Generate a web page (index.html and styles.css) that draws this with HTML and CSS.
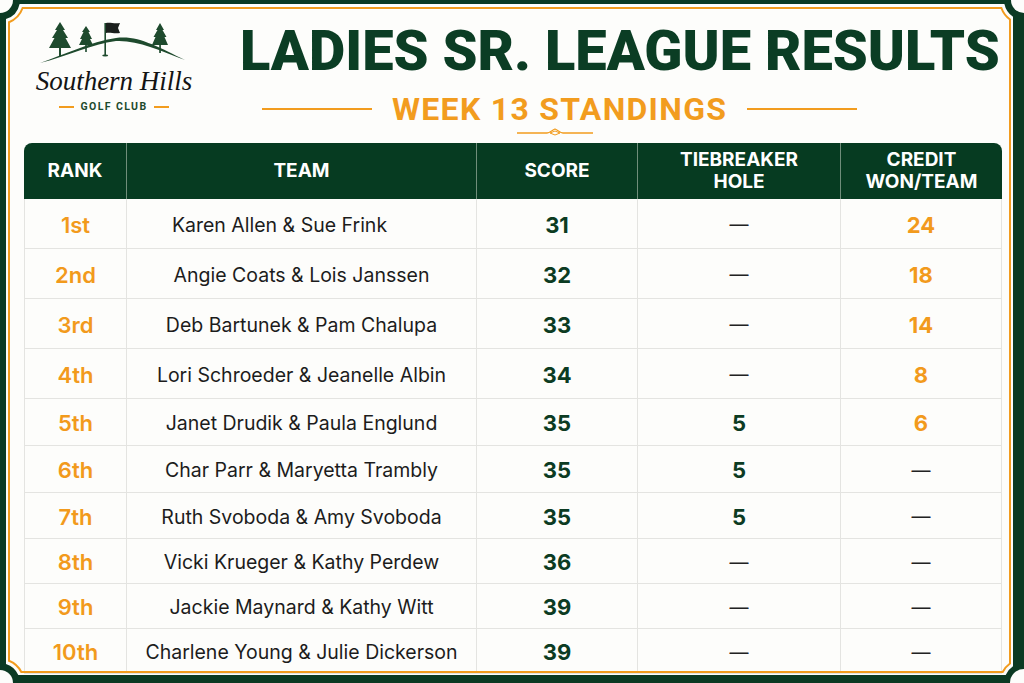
FILE: index.html
```html
<!DOCTYPE html>
<html lang="en">
<head>
<meta charset="utf-8">
<title>Ladies Sr. League Results</title>
<link rel="stylesheet" href="styles.css">
</head>
<body>
<div class="page">
  <header class="top">
    <div class="logo">
      <svg class="logo-art" viewBox="0 0 152 50" aria-hidden="true">
        <g fill="#1e4a2d">
          <polygon points="22,2 27,10 25,10 30,18 27.5,18 33,28 11,28 16.5,18 14,18 19,10 17,10"/>
          <rect x="21" y="27" width="2" height="9"/>
          <polygon points="48,6 52,12 50.5,12 54,19 52,19 55,25 41,25 44,19 42,19 45.5,12 44,12"/>
          <rect x="47.2" y="24" width="1.6" height="8"/>
          <polygon points="122,3 126,10 124.5,10 128.5,17 126.5,17 130,25 114,25 117.5,17 115.5,17 119.5,10 118,10"/>
          <rect x="121.2" y="24" width="1.7" height="9"/>
          <path d="M2 43 C28 34 52 22 78 18 C100 15 120 27 147 40 C120 30 100 20 78 21 C54 24 30 36 2 43 Z"/>
        </g>
        <rect x="66.4" y="3" width="1.6" height="32" fill="#1e4a2d"/>
        <path d="M68 3 C72 2 76 4 82 3 L80 8 L82 13 C76 14 72 12 68 13 Z" fill="#1b1f1d"/>
        <ellipse cx="67.2" cy="35.5" rx="3" ry="0.9" fill="#1e4a2d"/>
      </svg>
      <div class="logo-name">Southern Hills</div>
      <div class="logo-sub"><span class="dash"></span><span>GOLF CLUB</span><span class="dash"></span></div>
    </div>
    <div class="titles">
      <h1>LADIES SR. LEAGUE RESULTS</h1>
      <div class="sub"><span class="line"></span><h2>WEEK 13 STANDINGS</h2><span class="line"></span></div>
      <svg class="ornament" viewBox="0 0 76 10" aria-hidden="true">
        <path d="M0 6 H30 C33 6 35 3 38 2 C41 3 43 6 46 6 H76" fill="none" stroke="#f29c1e" stroke-width="1.3"/>
        <path d="M33 6 L38 4 L43 6 L38 8 Z" fill="none" stroke="#f29c1e" stroke-width="1"/>
      </svg>
    </div>
  </header>

  <div class="table">
    <div class="th">RANK</div>
    <div class="th">TEAM</div>
    <div class="th">SCORE</div>
    <div class="th">TIEBREAKER<br>HOLE</div>
    <div class="th">CREDIT<br>WON/TEAM</div>

    <div class="td rank">1st</div><div class="td team shift">Karen Allen &amp; Sue Frink</div><div class="td score">31</div><div class="td tie">—</div><div class="td cred">24</div>
    <div class="td rank">2nd</div><div class="td team">Angie Coats &amp; Lois Janssen</div><div class="td score">32</div><div class="td tie">—</div><div class="td cred">18</div>
    <div class="td rank">3rd</div><div class="td team">Deb Bartunek &amp; Pam Chalupa</div><div class="td score">33</div><div class="td tie">—</div><div class="td cred">14</div>
    <div class="td rank">4th</div><div class="td team">Lori Schroeder &amp; Jeanelle Albin</div><div class="td score">34</div><div class="td tie">—</div><div class="td cred">8</div>
    <div class="td rank">5th</div><div class="td team">Janet Drudik &amp; Paula Englund</div><div class="td score">35</div><div class="td tie num">5</div><div class="td cred">6</div>
    <div class="td rank">6th</div><div class="td team">Char Parr &amp; Maryetta Trambly</div><div class="td score">35</div><div class="td tie num">5</div><div class="td cred dash">—</div>
    <div class="td rank">7th</div><div class="td team">Ruth Svoboda &amp; Amy Svoboda</div><div class="td score">35</div><div class="td tie num">5</div><div class="td cred dash">—</div>
    <div class="td rank">8th</div><div class="td team">Vicki Krueger &amp; Kathy Perdew</div><div class="td score">36</div><div class="td tie">—</div><div class="td cred dash">—</div>
    <div class="td rank">9th</div><div class="td team">Jackie Maynard &amp; Kathy Witt</div><div class="td score">39</div><div class="td tie">—</div><div class="td cred dash">—</div>
    <div class="td rank">10th</div><div class="td team">Charlene Young &amp; Julie Dickerson</div><div class="td score">39</div><div class="td tie">—</div><div class="td cred dash">—</div>
  </div>

  <svg class="frame" viewBox="0 0 1024 683" aria-hidden="true">
    <path fill="#0b3a23" fill-rule="evenodd" d="M0 0 H1024 V683 H0 Z M6 19.1 A20 20 0 0 0 19.6 4 H1004.4 A20 20 0 0 0 1013 16.7 V666.3 A20 20 0 0 0 1005.7 675 H18.3 A20 20 0 0 0 6 663.9 Z"/>
    <circle cx="0" cy="0" r="13" fill="#fdfdfb"/>
    <circle cx="1024" cy="0" r="13" fill="#fdfdfb"/>
    <circle cx="0" cy="683" r="13" fill="#fdfdfb"/>
    <circle cx="1024" cy="683" r="14" fill="#fdfdfb"/>
    <path fill="none" stroke="#f29c1e" stroke-width="2" d="M9 22.2 A24 24 0 0 0 22.6 8 H1001.4 A24 24 0 0 0 1010 19.5 V663.5 A24 24 0 0 0 1002.7 672 H21.3 A24 24 0 0 0 9 660.8 Z"/>
  </svg>
</div>
</body>
</html>
```

FILE: styles.css
```css
* { box-sizing: border-box; margin: 0; padding: 0; }

body {
  margin: 0;
  background: #fdfdfb;
  font-family: Inter, Roboto, "Liberation Sans", sans-serif;
}

.page {
  position: relative;
  width: 1024px;
  height: 683px;
  overflow: hidden;
  background: #fdfdfb;
}

/* ---------- header ---------- */
.top {
  display: flex;
  height: 143px;
}

.logo {
  width: 152px;
  margin: 20px 0 0 38px;
  display: flex;
  flex-direction: column;
  align-items: center;
}

.logo-art {
  display: block;
  width: 152px;
  height: 50px;
}

.logo-name {
  margin-top: -4px;
  font-family: "Liberation Serif", serif;
  font-style: italic;
  font-size: 27px;
  line-height: 30px;
  color: #141414;
  white-space: nowrap;
}

.logo-sub {
  display: flex;
  align-items: center;
  gap: 6px;
  margin-top: 5px;
  font-family: Roboto, "Liberation Sans", sans-serif;
  font-size: 10.5px;
  line-height: 12px;
  font-weight: 700;
  letter-spacing: 1.4px;
  color: #1e4a2d;
}

.logo-sub .dash {
  width: 15px;
  height: 2px;
  background: #f29c1e;
}

.titles {
  flex: 1;
  display: flex;
  flex-direction: column;
}

h1 {
  margin: 23px 0 0 50px;
  font-family: Roboto, "Liberation Sans", sans-serif;
  font-weight: 900;
  font-size: 56px;
  line-height: 56px;
  color: #0b3d24;
  white-space: nowrap;
}

.sub {
  display: flex;
  align-items: center;
  gap: 20px;
  margin: 14px 0 0 72px;
  height: 32px;
}

.sub .line {
  width: 110px;
  height: 2px;
  background: #f29c1e;
}

h2 {
  font-family: Roboto, "Liberation Sans", sans-serif;
  font-weight: 700;
  font-size: 32px;
  line-height: 32px;
  letter-spacing: 1.3px;
  color: #f29c1e;
  white-space: nowrap;
}

.ornament {
  display: block;
  width: 76px;
  height: 10px;
  margin: 2px 0 0 327px;
}

/* ---------- table ---------- */
.table {
  margin-left: 24px;
  width: 978px;
  display: grid;
  grid-template-columns: 103px 350px 161px 203px 161px;
  grid-template-rows: 56px 50px 50px 50px 50px 47px 47px 46px 45px 45px 45px;
}

.th {
  display: flex;
  align-items: center;
  justify-content: center;
  text-align: center;
  background: #063b21;
  color: #ffffff;
  font-weight: 700;
  font-size: 19px;
  line-height: 22px;
  border-right: 1px solid #6f8d7a;
}

.th:first-child { border-top-left-radius: 8px; }
.th:nth-child(5) { border-top-right-radius: 8px; border-right: 0; }

.td {
  display: flex;
  align-items: center;
  justify-content: center;
  padding-top: 2px;
  background: #fdfdfb;
  border-right: 1px solid #e4e4e1;
  border-bottom: 1px solid #e4e4e1;
  white-space: nowrap;
}

.rank {
  border-left: 1px solid #e4e4e1;
  color: #f29a1c;
  font-weight: 600;
  font-size: 22px;
}

.team {
  color: #1c1c1c;
  font-size: 19.5px;
}

.team.shift { padding-right: 44px; }

.score {
  color: #0c3b22;
  font-weight: 700;
  font-size: 22px;
}

.tie {
  color: #222;
  font-size: 19px;
}

.tie.num {
  color: #0c3b22;
  font-weight: 700;
  font-size: 22px;
}

.cred {
  color: #f29a1c;
  font-weight: 700;
  font-size: 22px;
}

.cred.dash {
  color: #222;
  font-weight: 400;
  font-size: 19px;
}

/* ---------- decorative frame overlay ---------- */
.frame {
  position: absolute;
  left: 0;
  top: 0;
  width: 1024px;
  height: 683px;
  pointer-events: none;
}
```
